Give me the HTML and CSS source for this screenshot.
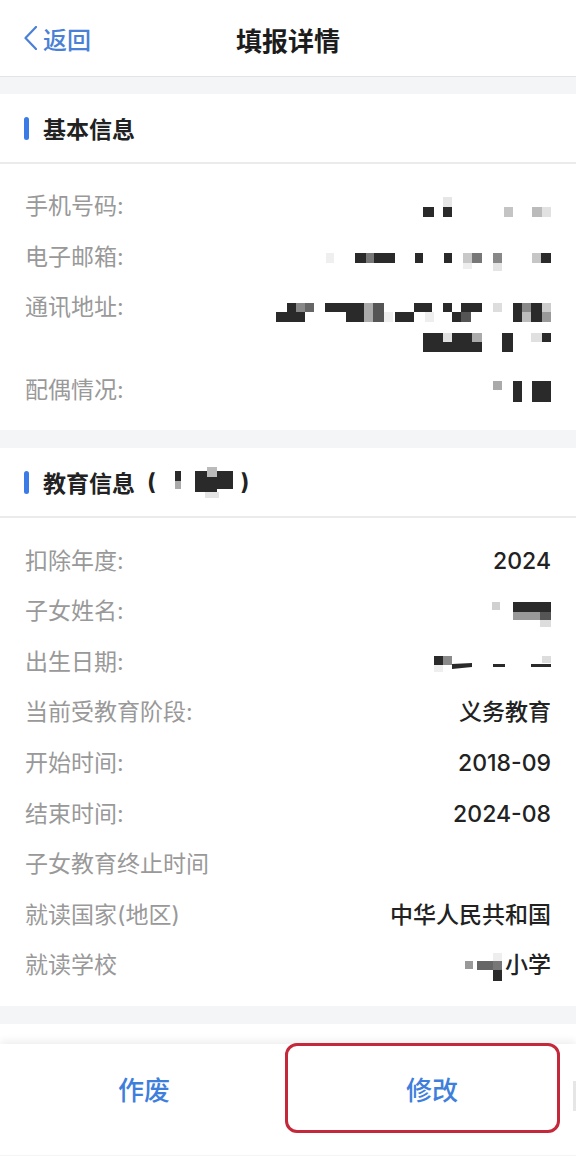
FILE: index.html
```html
<!DOCTYPE html>
<html lang="zh-CN">
<head>
    <meta charset="UTF-8">
    <meta name="viewport" content="width=device-width, initial-scale=1.0">
    <title>填报详情</title>
    <link rel="stylesheet" href="styles.css">
</head>
<body>
    <!-- Top Navigation -->
    <header class="nav">
        <a class="back" href="#">
            <svg class="back-icon" width="13" height="24" viewBox="0 0 13 24">
                <polyline points="12,1 1.5,12 12,23" fill="none" stroke="#4a80d6" stroke-width="2.2" stroke-linecap="round" stroke-linejoin="round"/>
            </svg>
            返回
        </a>
        <h1 class="nav-title">填报详情</h1>
        <span></span>
    </header>

    <main class="page">
        <!-- Basic Info -->
        <section class="card">
            <div class="card-head">
                <span class="mark"></span>
                <h2>基本信息</h2>
            </div>
            <div class="fields">
                <div class="field">
                    <span class="label">手机号码:</span>
                    <svg class="mosaic" width="130" height="32" viewBox="0 0 130 32">
                        <rect x="22" y="7" width="9" height="10" fill="#e6e6e6"/>
                        <rect x="2" y="17" width="11" height="10" fill="#2a2a2a"/>
                        <rect x="22" y="17" width="9" height="10" fill="#2a2a2a"/>
                        <rect x="83" y="17" width="9" height="10" fill="#c4c4c4"/>
                        <rect x="111" y="17" width="10" height="10" fill="#bbbbbb"/>
                        <rect x="121" y="17" width="9" height="10" fill="#e2e2e2"/>
                    </svg>
                </div>
                <div class="field">
                    <span class="label">电子邮箱:</span>
                    <svg class="mosaic" width="226" height="32" viewBox="0 0 226 32">
                        <rect x="1" y="12" width="8" height="10" fill="#efefef"/>
                        <rect x="30" y="12" width="11" height="10" fill="#2a2a2a"/>
                        <rect x="41" y="12" width="8" height="10" fill="#777777"/>
                        <rect x="49" y="12" width="21" height="10" fill="#2a2a2a"/>
                        <rect x="90" y="12" width="8" height="10" fill="#2a2a2a"/>
                        <rect x="119" y="12" width="8" height="10" fill="#2a2a2a"/>
                        <rect x="138" y="12" width="9" height="10" fill="#c8c8c8"/>
                        <rect x="138" y="22" width="9" height="6" fill="#eeeeee"/>
                        <rect x="147" y="12" width="10" height="10" fill="#777777"/>
                        <rect x="168" y="12" width="9" height="10" fill="#888888"/>
                        <rect x="168" y="22" width="9" height="8" fill="#e4e4e4"/>
                        <rect x="207" y="12" width="9" height="10" fill="#c6c6c6"/>
                        <rect x="216" y="12" width="10" height="10" fill="#2a2a2a"/>
                    </svg>
                </div>
                <div class="field">
                    <span class="label">通讯地址:</span>
                    <svg class="mosaic" width="275" height="64" viewBox="0 0 275 64">
                        <!-- line 1 -->
                        <rect x="11" y="12" width="9" height="9" fill="#2a2a2a"/>
                        <rect x="20" y="12" width="9" height="9" fill="#888888"/>
                        <rect x="29" y="12" width="9" height="9" fill="#666666"/>
                        <rect x="49" y="12" width="39" height="9" fill="#2a2a2a"/>
                        <rect x="0" y="21" width="29" height="10" fill="#2a2a2a"/>
                        <rect x="70" y="21" width="18" height="10" fill="#2a2a2a"/>
                        <rect x="88" y="12" width="9" height="19" fill="#aaaaaa"/>
                        <rect x="97" y="12" width="11" height="19" fill="#555555"/>
                        <rect x="108" y="21" width="9" height="10" fill="#eeeeee"/>
                        <rect x="119" y="21" width="19" height="10" fill="#2a2a2a"/>
                        <rect x="138" y="12" width="18" height="9" fill="#2a2a2a"/>
                        <rect x="149" y="21" width="9" height="10" fill="#eeeeee"/>
                        <rect x="167" y="12" width="9" height="9" fill="#2a2a2a"/>
                        <rect x="185" y="12" width="21" height="9" fill="#2a2a2a"/>
                        <rect x="176" y="21" width="9" height="10" fill="#2a2a2a"/>
                        <rect x="185" y="21" width="10" height="10" fill="#555555"/>
                        <rect x="217" y="12" width="9" height="9" fill="#dddddd"/>
                        <rect x="237" y="12" width="9" height="19" fill="#2a2a2a"/>
                        <rect x="246" y="12" width="9" height="9" fill="#888888"/>
                        <rect x="246" y="21" width="9" height="10" fill="#bbbbbb"/>
                        <rect x="255" y="12" width="11" height="19" fill="#2a2a2a"/>
                        <rect x="266" y="12" width="9" height="9" fill="#cccccc"/>
                        <rect x="266" y="21" width="9" height="10" fill="#999999"/>
                        <!-- line 2 -->
                        <rect x="147" y="42" width="20" height="9" fill="#2a2a2a"/>
                        <rect x="167" y="42" width="9" height="9" fill="#e0e0e0"/>
                        <rect x="176" y="42" width="20" height="9" fill="#2a2a2a"/>
                        <rect x="196" y="42" width="10" height="9" fill="#aaaaaa"/>
                        <rect x="147" y="51" width="59" height="10" fill="#2a2a2a"/>
                        <rect x="226" y="42" width="11" height="19" fill="#2a2a2a"/>
                        <rect x="255" y="42" width="11" height="9" fill="#e0e0e0"/>
                        <rect x="266" y="42" width="9" height="9" fill="#2a2a2a"/>
                    </svg>
                </div>
                <div class="field">
                    <span class="label">配偶情况:</span>
                    <svg class="mosaic" width="61" height="32" viewBox="0 0 61 32">
                        <rect x="3" y="7" width="9" height="9" fill="#aaaaaa"/>
                        <rect x="23" y="7" width="9" height="21" fill="#2a2a2a"/>
                        <rect x="42" y="7" width="19" height="21" fill="#2a2a2a"/>
                    </svg>
                </div>
            </div>
        </section>

        <!-- Education Info -->
        <section class="card">
            <div class="card-head">
                <span class="mark"></span>
                <h2>教育信息</h2>
                <h2 class="paren">(</h2>
                <svg class="head-mosaic" width="62" height="32" viewBox="0 0 62 32">
                    <rect x="2" y="5" width="6" height="10" fill="#2a2a2a"/>
                    <rect x="2" y="15" width="6" height="8" fill="#aaaaaa"/>
                    <rect x="22" y="5" width="12" height="21" fill="#2a2a2a"/>
                    <rect x="34" y="1" width="10" height="10" fill="#bbbbbb"/>
                    <rect x="34" y="11" width="10" height="15" fill="#2a2a2a"/>
                    <rect x="32" y="26" width="14" height="6" fill="#e4e4e4"/>
                    <rect x="44" y="5" width="16" height="18" fill="#2a2a2a"/>
                </svg>
                <h2>)</h2>
            </div>
            <div class="fields">
                <div class="field">
                    <span class="label">扣除年度:</span>
                    <span class="value">2024</span>
                </div>
                <div class="field">
                    <span class="label">子女姓名:</span>
                    <svg class="mosaic" width="60" height="32" viewBox="0 0 60 32">
                        <rect x="1" y="7" width="8" height="8" fill="#d0d0d0"/>
                        <rect x="22" y="7" width="38" height="10" fill="#2a2a2a"/>
                        <rect x="22" y="17" width="27" height="8" fill="#999999"/>
                        <rect x="49" y="17" width="11" height="8" fill="#555555"/>
                        <rect x="49" y="25" width="11" height="7" fill="#dddddd"/>
                    </svg>
                </div>
                <div class="field">
                    <span class="label">出生日期:</span>
                    <svg class="mosaic" width="118" height="32" viewBox="0 0 118 32">
                        <rect x="1" y="10" width="9" height="9" fill="#2a2a2a"/>
                        <rect x="10" y="10" width="9" height="9" fill="#8a8a8a"/>
                        <rect x="1" y="19" width="9" height="7" fill="#eeeeee"/>
                        <polygon points="19,18 39,17 39,21 19,23" fill="#2a2a2a"/>
                        <rect x="60" y="18" width="12" height="3" fill="#2a2a2a"/>
                        <rect x="109" y="10" width="9" height="7" fill="#dddddd"/>
                        <rect x="98" y="18" width="20" height="3" fill="#2a2a2a"/>
                    </svg>
                </div>
                <div class="field">
                    <span class="label">当前受教育阶段:</span>
                    <span class="value">义务教育</span>
                </div>
                <div class="field">
                    <span class="label">开始时间:</span>
                    <span class="value">2018-09</span>
                </div>
                <div class="field">
                    <span class="label">结束时间:</span>
                    <span class="value">2024-08</span>
                </div>
                <div class="field">
                    <span class="label">子女教育终止时间</span>
                    <span class="value"></span>
                </div>
                <div class="field">
                    <span class="label">就读国家(地区)</span>
                    <span class="value">中华人民共和国</span>
                </div>
                <div class="field">
                    <span class="label">就读学校</span>
                    <span class="value school">
                        <svg class="inline-mosaic" width="40" height="32" viewBox="0 0 40 32">
                            <rect x="0" y="12" width="8" height="8" fill="#999999"/>
                            <rect x="12" y="12" width="16" height="9" fill="#666666"/>
                            <rect x="28" y="4" width="9" height="8" fill="#eeeeee"/>
                            <rect x="28" y="12" width="9" height="9" fill="#777777"/>
                            <rect x="28" y="21" width="9" height="11" fill="#2a2a2a"/>
                        </svg>小学
                    </span>
                </div>
            </div>
        </section>

        <section class="card card-stub"></section>
    </main>

    <!-- Bottom Actions -->
    <footer class="actions">
        <button class="act" type="button">作废</button>
        <button class="act" type="button">修改</button>
        <span class="highlight"></span>
        <span class="edge"></span>
    </footer>
</body>
</html>
```

FILE: styles.css
```css
/* General Styling */
body {
    margin: 0;
    padding: 0;
    background: #f4f5f7;
    font-family: Inter, "Noto Sans CJK SC", sans-serif;
    color: #222;
}

/* Navigation */
.nav {
    height: 76px;
    display: grid;
    grid-template-columns: 1fr auto 1fr;
    align-items: center;
    background: #fff;
    border-bottom: 1px solid #e4e4e4;
}
.back {
    display: flex;
    align-items: center;
    gap: 6px;
    padding-left: 24px;
    color: #4a80d6;
    font-size: 24px;
    font-weight: 500;
    text-decoration: none;
}
.back-icon {
    display: block;
}
.nav-title {
    margin: 0;
    padding-top: 3px;
    font-size: 26px;
    font-weight: bold;
    color: #1c1c1c;
}

/* Cards */
.page {
    display: flex;
    flex-direction: column;
    gap: 18px;
    padding-top: 17px;
}
.card {
    background: #fff;
}
.card-stub {
    height: 20px;
}
.card-head {
    height: 68px;
    display: flex;
    align-items: center;
    padding-left: 24px;
    border-bottom: 2px solid #ebebeb;
}
.mark {
    width: 5px;
    height: 23px;
    border-radius: 3px;
    background: #3b7be8;
    margin-right: 14px;
}
.card-head h2 {
    margin: 0;
    font-size: 23px;
    font-weight: bold;
    color: #222;
}
.card-head .paren {
    margin-left: 12px;
}
.head-mosaic {
    display: block;
    margin: 0 6px 0 17px;
}

/* Fields */
.fields {
    padding: 17px 25px 15px 25px;
}
.field {
    display: flex;
    justify-content: space-between;
    align-items: flex-start;
    padding: 9.3px 0;
    line-height: 32px;
}
.label {
    font-size: 23px;
    color: #999;
}
.value {
    font-size: 23px;
    font-weight: 500;
    color: #222;
}
.mosaic {
    display: block;
}
.school {
    display: flex;
    align-items: flex-start;
}
.inline-mosaic {
    display: block;
}

/* Bottom Actions */
.actions {
    position: relative;
    height: 111px;
    display: grid;
    grid-template-columns: 1fr 1fr;
    align-items: start;
    background: #fff;
    box-shadow: 0 -3px 8px rgba(0, 0, 0, 0.07);
}
.act {
    height: 90px;
    border: none;
    background: none;
    font-family: inherit;
    font-size: 26px;
    font-weight: 500;
    color: #3f7fdc;
    cursor: pointer;
}
.highlight {
    position: absolute;
    left: 285px;
    top: -1px;
    width: 269px;
    height: 84px;
    border: 3px solid #c4283a;
    border-radius: 12px;
}
.edge {
    position: absolute;
    right: 0;
    top: 37px;
    width: 3px;
    height: 30px;
    background: #e6e6e6;
}
```
